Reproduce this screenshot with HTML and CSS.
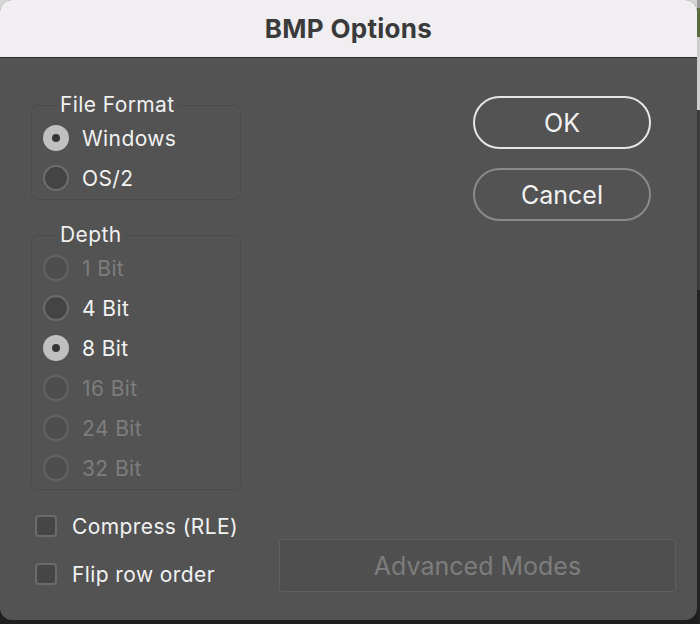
FILE: index.html
```html
<!DOCTYPE html>
<html>
<head>
<meta charset="utf-8">
<link rel="stylesheet" href="styles.css">
</head>
<body>
<div class="desk">
  <div class="window">
    <div class="titlebar">BMP Options</div>
    <div class="body">
      <div class="top">
        <div class="left">
          <fieldset class="group">
            <legend>File Format</legend>
            <div class="row"><span class="radio checked"></span><span class="label">Windows</span></div>
            <div class="row"><span class="radio"></span><span class="label">OS/2</span></div>
          </fieldset>
          <fieldset class="group depth">
            <legend>Depth</legend>
            <div class="row disabled"><span class="radio"></span><span class="label">1 Bit</span></div>
            <div class="row"><span class="radio"></span><span class="label">4 Bit</span></div>
            <div class="row"><span class="radio checked"></span><span class="label">8 Bit</span></div>
            <div class="row disabled"><span class="radio"></span><span class="label">16 Bit</span></div>
            <div class="row disabled"><span class="radio"></span><span class="label">24 Bit</span></div>
            <div class="row disabled"><span class="radio"></span><span class="label">32 Bit</span></div>
          </fieldset>
        </div>
        <div class="buttons">
          <button class="btn primary">OK</button>
          <button class="btn">Cancel</button>
        </div>
      </div>
      <div class="bottom">
        <div class="checks">
          <div class="check-row"><span class="checkbox"></span><span class="label">Compress (RLE)</span></div>
          <div class="check-row"><span class="checkbox"></span><span class="label">Flip row order</span></div>
        </div>
        <button class="advanced">Advanced Modes</button>
      </div>
    </div>
  </div>
  <div class="strip">
    <div class="s1"></div>
    <div class="s2"></div>
    <div class="s3"></div>
    <div class="s4"></div>
    <div class="s5"></div>
  </div>
</div>
</body>
</html>
```

FILE: styles.css
```css
html, body {
  margin: 0;
  padding: 0;
}
body {
  width: 700px;
  height: 624px;
  overflow: hidden;
  font-family: Inter, "Noto Sans", "Liberation Sans", sans-serif;
  background: #1e1e1e;
}
.desk {
  display: flex;
  width: 700px;
  height: 624px;
  background: linear-gradient(#d6d6d6 0, #d6d6d6 30px, #262626 30px, #1e1e1e 100%);
}
.window {
  width: 697px;
  height: 620px;
  border-radius: 12px;
  overflow: hidden;
  background: #535353;
  display: flex;
  flex-direction: column;
  flex: none;
}
.titlebar {
  height: 58px;
  box-sizing: border-box;
  border-bottom: 1px solid #2b2b2b;
  background: #f0eef0;
  color: #3a3a3a;
  font-weight: 700;
  font-size: 26px;
  letter-spacing: 0.3px;
  display: flex;
  align-items: center;
  justify-content: center;
  padding-bottom: 1px;
}
.body {
  flex: 1;
  display: flex;
  flex-direction: column;
}
.top {
  display: flex;
}
.left {
  margin-left: 31px;
  width: 210px;
  margin-top: 35px;
}
.group {
  margin: 0;
  padding: 1px 0 1px 11px;
  border: 1px solid #4b4b4b;
  border-radius: 7px;
}
.group legend {
  margin-left: 13px;
  padding: 0 4px;
  height: 24px;
  line-height: 24px;
  font-size: 21px;
  letter-spacing: 0.4px;
  color: #f0f0f0;
}
.depth {
  margin-top: 23px;
}
.row {
  height: 40px;
  display: flex;
  align-items: center;
}
.radio {
  width: 26px;
  height: 26px;
  box-sizing: border-box;
  border-radius: 50%;
  border: 2px solid #6c6c6c;
  background: #444444;
  flex: none;
  display: flex;
  align-items: center;
  justify-content: center;
}
.radio.checked {
  border: none;
  background: #c0c0c0;
}
.radio.checked::after {
  content: "";
  width: 8px;
  height: 8px;
  border-radius: 50%;
  background: #363636;
}
.label {
  margin-left: 13px;
  font-size: 21px;
  letter-spacing: 0.4px;
  color: #f2f2f2;
  white-space: nowrap;
}
.row.disabled .radio {
  border-color: #636363;
  background: #4e4e4e;
}
.row.disabled .label {
  color: #7d7d7d;
}
.buttons {
  margin-left: 232px;
  margin-top: 38px;
  display: flex;
  flex-direction: column;
  gap: 19px;
}
.btn {
  width: 178px;
  height: 53px;
  border-radius: 27px;
  border: 2px solid #8a8a8a;
  background: transparent;
  color: #f2f2f2;
  font-family: inherit;
  font-size: 25px;
  padding: 0;
}
.btn.primary {
  border-color: #e6e6e6;
}
.bottom {
  display: flex;
  margin-top: 12px;
}
.checks {
  margin-left: 35px;
  width: 244px;
}
.check-row {
  height: 48px;
  display: flex;
  align-items: center;
}
.checkbox {
  width: 22px;
  height: 22px;
  box-sizing: border-box;
  border: 2px solid #6a6a6a;
  background: #464646;
  border-radius: 4px;
  flex: none;
}
.check-row .label {
  margin-left: 15px;
}
.advanced {
  align-self: flex-end;
  margin-bottom: 6px;
  width: 397px;
  height: 53px;
  border: 1px solid #5f5f5f;
  border-radius: 3px;
  background: #4f4f4f;
  color: #7d7d7d;
  font-family: inherit;
  font-size: 25px;
  padding: 0;
}
.strip {
  flex: 1;
  display: flex;
  flex-direction: column;
}
.s1 { height: 8px; background: #9a9a9a; }
.s2 { height: 29px; background: #5c6b3e; }
.s3 { height: 73px; background: #cfcfcf; }
.s4 { height: 180px; background: #3b3b3b; }
.s5 { flex: 1; background: #222222; }
```
